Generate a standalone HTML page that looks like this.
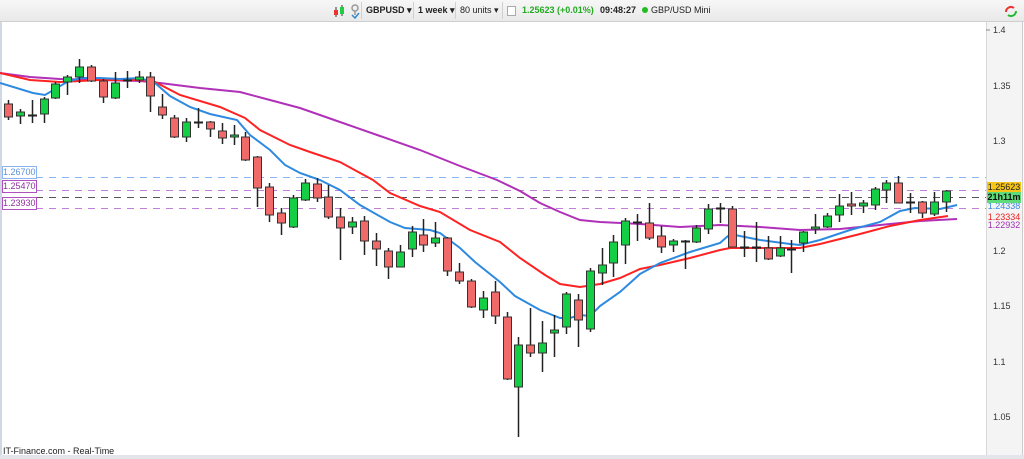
<!DOCTYPE html>
<html><head><meta charset="utf-8"><style>
body{margin:0;width:1024px;height:459px;overflow:hidden;background:#fff;font-family:"Liberation Sans",sans-serif;position:relative}
#tb{position:absolute;left:0;top:0;width:1024px;height:21px;background:linear-gradient(#f7f7f7,#e9e9e9);border-bottom:1px solid #cfcfcf;font-size:9px;color:#222}
#tb span{position:absolute;top:5px;white-space:nowrap}
.sep{position:absolute;top:2px;width:1px;height:17px;background:#d0d0d0}
#ax{position:absolute;left:986px;top:22px;width:36px;height:433px;background:#f4f4f4;border-left:1px solid #d8d8d8}
.al{position:absolute;left:993px;font-size:9px;color:#333}
.tag{position:absolute;left:987px;width:34px;height:10px;font-size:9px;line-height:10px;text-align:center}
.lt{position:absolute;left:2px;width:33px;height:11px;font-size:9px;line-height:11px;background:#fff}
</style></head><body>
<div id="tb">
<svg style="position:absolute;left:332px;top:4px" width="14" height="14"><line x1="4" y1="3" x2="4" y2="13" stroke="#333"/><rect x="2" y="6" width="4" height="5" fill="#e33"/><line x1="10" y1="1" x2="10" y2="12" stroke="#333"/><rect x="8" y="3" width="4" height="7" fill="#2c4"/></svg>
<svg style="position:absolute;left:350px;top:3px" width="10" height="16"><circle cx="5" cy="5" r="3" fill="none" stroke="#999" stroke-width="1.5"/><path d="M5 8v4" stroke="#999" stroke-width="1.5"/><path d="M2 12l3 3 4-5" stroke="#38c" stroke-width="1.5" fill="none"/></svg>
<div class="sep" style="left:361px"></div>
<span style="left:366px;font-weight:bold">GBPUSD ▾</span>
<div class="sep" style="left:413px"></div>
<span style="left:418px;font-weight:bold">1 week ▾</span>
<div class="sep" style="left:455px"></div>
<span style="left:460px">80 units ▾</span>
<div class="sep" style="left:502px"></div>
<span style="left:507px;width:7px;height:8px;border:1px solid #aaa;top:6px;background:#fff"></span>
<span style="left:522px;color:#2a2;font-weight:bold">1.25623 (+0.01%)</span>
<span style="left:600px;font-weight:bold">09:48:27</span>
<span style="left:642px;top:7px;width:6px;height:6px;border-radius:3px;background:#2b2"></span>
<span style="left:651px">GBP/USD Mini</span>
<svg style="position:absolute;left:1003px;top:5px" width="16" height="13"><path d="M3 7a5 5 0 0 1 8-4" stroke="#e33" stroke-width="2" fill="none"/><path d="M13 6a5 5 0 0 1-8 4" stroke="#2b3" stroke-width="2" fill="none"/></svg>
</div>
<div style="position:absolute;left:0;top:22px;width:2px;height:433px;background:#cfd8e3"></div>
<div id="ax"></div>
<div style="position:absolute;left:1022px;top:22px;width:1px;height:433px;background:#ccc"></div>
<div style="position:absolute;left:0;top:455px;width:1024px;height:4px;background:#e2e6ea"></div>
<svg id="ch" style="position:absolute;left:0;top:0" width="1024" height="459"></svg>
<div class="al" style="top:25px">1.4</div>
<div class="al" style="top:81px">1.35</div>
<div class="al" style="top:136px">1.3</div>
<div class="al" style="top:246px">1.2</div>
<div class="al" style="top:301px">1.15</div>
<div class="al" style="top:357px">1.1</div>
<div class="al" style="top:412px">1.05</div>
<div class="tag" style="top:182px;background:#f5c518;color:#222">1.25623</div>
<div class="tag" style="top:192px;background:#5fdc7a;color:#111;font-weight:bold;height:11px">21h11m</div>
<div class="tag" style="top:203px;color:#3a86e0;height:7px;overflow:hidden;line-height:6px">1.24338</div>
<div class="tag" style="top:212px;color:#e22">1.23334</div>
<div class="tag" style="top:220px;color:#a030b0">1.22932</div>
<div class="lt" style="top:166px;border:1px solid #8ab4f0;color:#5a8fdc">1.26700</div>
<div class="lt" style="top:180px;border:1px solid #b050c0;color:#9030a0">1.25470</div>
<div class="lt" style="top:197px;border:1px solid #b050c0;color:#9030a0">1.23930</div>
<div style="position:absolute;left:3px;top:446px;font-size:9px;color:#222">IT-Finance.com - Real-Time</div>
<script>
var d=[[104,117,100,120],[116,112,109,124],[115,115,100,123],[114,99,97,123],[98,84,82,99],[82,77,75,95],[77,67,59,83],[67,81,65,82],[81,97,79,103],[98,83,72,99],[80,80,71,88],[80,77,71,83],[77,96,72,112],[107,115,94,119],[118,137,115,138],[137,122,118,142],[122,122,108,128],[122,129,121,137],[131,138,123,144],[137,135,125,145],[137,160,132,161],[157,188,156,207],[187,215,183,222],[213,223,208,235],[227,198,195,228],[200,183,179,201],[184,198,178,202],[197,217,185,219],[217,228,208,260],[227,222,217,234],[221,241,216,255],[241,249,233,266],[251,267,248,279],[267,252,245,267],[249,232,226,257],[235,245,219,252],[243,238,222,247],[238,271,237,276],[272,281,263,284],[281,307,279,308],[310,298,291,318],[292,316,281,324],[317,379,312,380],[387,345,337,437],[345,353,308,357],[353,343,321,372],[333,330,315,357],[327,294,292,334],[300,320,294,347],[329,271,268,332],[273,265,248,285],[263,242,235,277],[245,221,218,264],[222,222,214,241],[223,238,203,240],[236,247,226,253],[245,241,239,252],[241,241,240,269],[242,228,225,243],[229,209,204,234],[208,208,203,223],[209,247,206,247],[247,247,231,257],[247,248,222,262],[248,259,236,260],[256,248,236,257],[249,249,240,273],[243,232,231,252],[229,227,214,234],[227,216,213,228],[215,206,194,222],[204,206,192,215],[206,203,200,213],[205,189,187,210],[190,183,180,203],[183,203,176,203],[202,202,193,213],[202,213,201,218],[214,202,192,216],[202,191,190,212]];
var s='';
function hl(y,c){s+='<line x1="36" y1="'+y+'" x2="986" y2="'+y+'" stroke="'+c+'" stroke-dasharray="7,6"/>';}
hl(177.5,'#8ab4f0');hl(190.5,'#c080d8');hl(197.5,'#555');hl(208.5,'#c080d8');
s+='<line x1="986" y1="30" x2="990" y2="30" stroke="#888"/>';
function pl(p,c){s+='<polyline fill="none" stroke="'+c+'" stroke-width="2" points="'+p+'"/>';}
pl('0,73 30,77 60,79 100,80 140,81 160,83 200,88 240,92 270,100 300,108 340,122 380,136 420,150 460,166 497,180 520,191 540,203 560,212 580,220 600,222 640,224 680,227 720,225 760,227 800,230 840,229 880,225 920,221 957,219','#b030b8');
pl('0,73 30,80 60,82 100,80 140,80 155,82 180,95 220,107 245,118 260,130 290,145 310,152 340,162 373,180 390,193 420,206 440,212 470,230 500,242 520,258 545,275 560,284 580,287 600,284 620,278 640,269 660,265 690,258 720,250 730,248 760,248 800,248 820,244 860,234 890,226 920,220 948,216','#f22');
pl('0,83 33,93 45,95 67,82 80,78 100,78 120,79 140,78 155,83 170,96 190,107 210,114 237,120 250,135 270,150 285,165 300,173 320,180 340,190 360,205 390,222 405,228 430,230 440,233 460,248 475,262 500,282 515,296 540,310 560,318 570,318 580,315 590,316 600,306 620,292 640,274 660,263 690,252 720,243 728,236 735,235 760,240 790,244 800,245 820,240 850,230 880,222 900,211 915,208 940,209 957,205','#2e8ae0');
for(var i=0;i<d.length;i++){var x=Math.round(8+i*11.87),o=d[i][0],c=d[i][1];
s+='<line x1="'+(x+.5)+'" y1="'+d[i][2]+'" x2="'+(x+.5)+'" y2="'+d[i][3]+'" stroke="#222" stroke-width="1.5"/>';
var t=Math.min(o,c),h=Math.abs(o-c);
if(h<2){s+='<rect x="'+(x-4)+'" y="'+(t-0.5)+'" width="9" height="2" fill="#222"/>';}
else s+='<rect x="'+(x-3.5)+'" y="'+t+'" width="8" height="'+h+'" fill="'+(c<o?'#14cf45':'#f06a6a')+'" stroke="#333" stroke-width="1"/>';}
document.getElementById('ch').innerHTML=s;
</script>
</body></html>
